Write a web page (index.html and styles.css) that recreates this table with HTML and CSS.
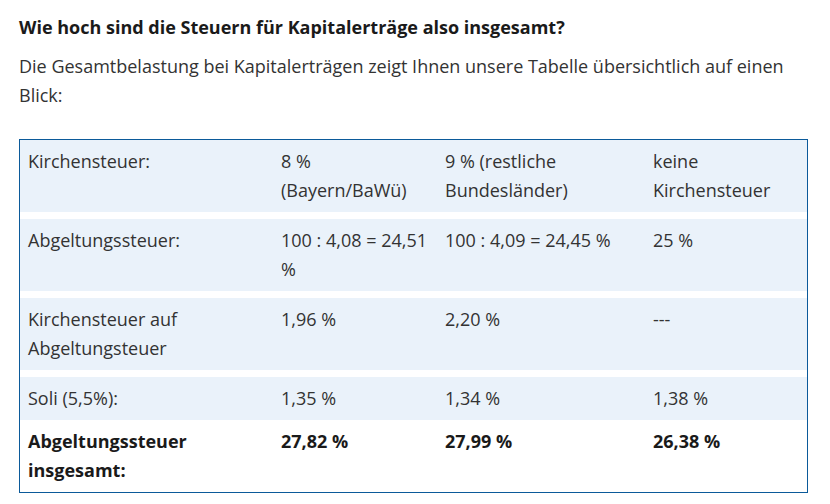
FILE: index.html
```html
<!DOCTYPE html>
<html lang="de">
<head>
<meta charset="utf-8">
<link rel="stylesheet" href="styles.css">
</head>
<body>
<div class="content">
  <h3 class="heading">Wie hoch sind die Steuern für Kapitalerträge also insgesamt?</h3>
  <p class="intro">Die Gesamtbelastung bei Kapitalerträgen zeigt Ihnen unsere Tabelle übersichtlich auf einen Blick:</p>
  <table class="tax-table">
    <colgroup>
      <col class="c1"><col class="c2"><col class="c3"><col class="c4">
    </colgroup>
    <tbody>
      <tr class="striped">
        <td>Kirchensteuer:</td>
        <td>8 % (Bayern/BaWü)</td>
        <td>9 % (restliche Bundesländer)</td>
        <td>keine Kirchensteuer</td>
      </tr>
      <tr class="striped gap">
        <td>Abgeltungssteuer:</td>
        <td>100 : 4,08 = 24,51 %</td>
        <td>100 : 4,09 = 24,45 %</td>
        <td>25 %</td>
      </tr>
      <tr class="striped gap">
        <td>Kirchensteuer auf Abgeltungsteuer</td>
        <td>1,96 %</td>
        <td>2,20 %</td>
        <td>---</td>
      </tr>
      <tr class="striped gap">
        <td>Soli (5,5%):</td>
        <td>1,35 %</td>
        <td>1,34 %</td>
        <td>1,38 %</td>
      </tr>
      <tr class="total">
        <td>Abgeltungssteuer insgesamt:</td>
        <td>27,82 %</td>
        <td>27,99 %</td>
        <td>26,38 %</td>
      </tr>
    </tbody>
  </table>
</div>
</body>
</html>
```
FILE: styles.css
```css
html, body {
  margin: 0;
  padding: 0;
  background: #ffffff;
}

body {
  font-family: "Open Sans", "Liberation Sans", sans-serif;
  color: #333333;
}

.content {
  padding: 14px 22px 0 19px;
}

.heading {
  margin: 0;
  font-size: 18px;
  line-height: 26px;
  font-weight: 700;
  color: #1a1a1a;
}

.intro {
  margin: 12px 0 0 0;
  font-size: 18px;
  line-height: 29px;
  color: #333333;
}

.tax-table {
  margin-top: 29px;
  width: 789px;
  table-layout: fixed;
  border: 1px solid #0b5a9a;
  border-collapse: separate;
  border-spacing: 0;
  font-size: 18px;
  line-height: 29px;
  color: #333333;
}

.c1 { width: 253px; }
.c2 { width: 164px; }
.c3 { width: 208px; }
.c4 { width: 162px; }

.tax-table td {
  padding: 7px 8px 7px 8px;
  vertical-align: top;
  text-align: left;
}

.striped td {
  background: #eaf2fa;
}

.gap td {
  border-top: 7px solid #ffffff;
}

.total td {
  font-weight: 700;
  color: #1a1a1a;
}
```
